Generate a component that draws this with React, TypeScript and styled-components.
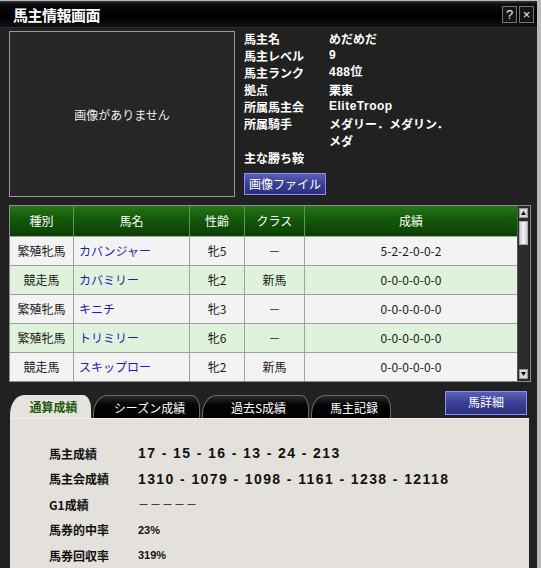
import React from "react";
import styled, { createGlobalStyle } from "styled-components";

const jp = `"Noto Sans CJK JP", "Liberation Sans", sans-serif`;
const latin = `"Liberation Sans", "Noto Sans CJK JP", sans-serif`;

const GlobalStyle = createGlobalStyle`
  html, body {
    margin: 0;
    padding: 0;
    background: #b9b9b9;
    font-family: ${jp};
  }
`;

const Window = styled.div`
  width: 537px;
  height: 567px;
  margin-top: 1px;
  background: #212121;
  display: flex;
  flex-direction: column;
  overflow: hidden;
`;

const TitleBar = styled.div`
  height: 26px;
  flex: 0 0 auto;
  display: flex;
  align-items: center;
  padding: 0 3px 0 13px;
  background: linear-gradient(#3a3a3a 0, #0c0c0c 3px, #000 60%, #111 100%);
  border-bottom: 1px solid #2c2c2c;
`;

const Title = styled.div`
  flex: 1;
  color: #fff;
  font-size: 15px;
  font-weight: bold;
  letter-spacing: -0.5px;
`;

const TitleButton = styled.div`
  width: 13px;
  height: 15px;
  margin-left: 2px;
  border: 1px solid #777;
  background: #151515;
  color: #eee;
  font-family: ${latin};
  font-size: 13px;
  line-height: 15px;
  text-align: center;
`;

const Top = styled.div`
  display: flex;
  gap: 9px;
  padding: 2px 0 0 9px;
`;

const ImageBox = styled.div`
  width: 224px;
  height: 164px;
  margin-top: 1px;
  border: 1px solid #9a9a9a;
  background: #262626;
  color: #eee;
  font-size: 12px;
  display: flex;
  align-items: center;
  justify-content: center;
`;

const Info = styled.div`
  display: flex;
  flex-direction: column;
`;

const InfoGrid = styled.div`
  display: grid;
  grid-template-columns: 85px 122px;
  line-height: 17px;
  font-size: 12px;
  font-weight: bold;
  color: #fff;
`;

const InfoValue = styled.div<{ $latin?: boolean }>`
  font-family: ${(p) => (p.$latin ? latin : jp)};
  letter-spacing: ${(p) => (p.$latin ? "0.5px" : "0")};
`;

const BlueButton = styled.div<{ $w: number }>`
  width: ${(p) => p.$w}px;
  height: 22px;
  box-sizing: border-box;
  border: 1px solid #8f93d8;
  background: linear-gradient(#5a5fb8, #3b3f92 50%, #2d3080);
  color: #fff;
  font-size: 12px;
  line-height: 20px;
  text-align: center;
  box-shadow: 0 0 0 1px #1a1a40;
`;

const TableWrap = styled.div`
  margin: 8px 0 0 9px;
  width: 520px;
  border: 1px solid #8c8c8c;
  display: flex;
`;

const Grid = styled.div`
  width: 507px;
  display: grid;
  grid-template-columns: 63px 116px 55px 60px 213px;
`;

const HeadCell = styled.div`
  height: 30px;
  box-sizing: border-box;
  border-left: 1px solid #6a8f5e;
  background: linear-gradient(#27761a, #145a0a 40%, #0c3f05);
  color: #fff;
  font-size: 12px;
  line-height: 30px;
  text-align: center;
  &:first-child {
    border-left: none;
  }
`;

const Cell = styled.div<{ $alt: boolean; $first?: boolean; $name?: boolean }>`
  height: 29px;
  box-sizing: border-box;
  border-top: 1px solid #a0a0a0;
  border-left: ${(p) => (p.$first ? "none" : "1px solid #a0a0a0")};
  background: ${(p) => (p.$alt ? "#dff2dc" : "#f3f3f3")};
  color: ${(p) => (p.$name ? "#1c1cb0" : "#1a1a1a")};
  font-size: 12px;
  line-height: 28px;
  text-align: ${(p) => (p.$name ? "left" : "center")};
  padding-left: ${(p) => (p.$name ? "5px" : "0")};
  font-family: ${jp};
`;

const ScrollBar = styled.div`
  width: 12px;
  background: #2b2b2b;
  border-left: 1px solid #555;
  display: flex;
  flex-direction: column;
  align-items: center;
  padding: 2px 0;
  box-sizing: border-box;
`;

const ScrollArrow = styled.div`
  width: 9px;
  height: 10px;
  background: #d8d8d8;
  border: 1px solid #999;
  box-sizing: border-box;
  display: flex;
  align-items: center;
  justify-content: center;
`;

const Thumb = styled.div`
  width: 7px;
  height: 22px;
  margin-top: 3px;
  background: linear-gradient(90deg, #cfcfcf, #f4f4f4, #cfcfcf);
  border: 1px solid #aaa;
  flex: 0 0 auto;
`;

const Spacer = styled.div`
  flex: 1;
`;

const TabRow = styled.div`
  display: flex;
  align-items: flex-end;
  height: 42px;
  padding: 0 10px 0 10px;
`;

const Tabs = styled.div`
  display: flex;
  gap: 2px;
`;

const Tab = styled.div<{ $active?: boolean; $w: number }>`
  width: ${(p) => p.$w}px;
  height: 23px;
  box-sizing: border-box;
  border-radius: 14px 8px 0 0 / 20px 14px 0 0;
  background: ${(p) =>
    p.$active ? "#e6e3df" : "linear-gradient(#2a2a2a, #050505 40%, #000)"};
  border: ${(p) => (p.$active ? "none" : "1px solid #6a6a6a")};
  border-bottom: none;
  color: ${(p) => (p.$active ? "#1d5a0b" : "#fff")};
  font-size: 12px;
  font-weight: ${(p) => (p.$active ? "bold" : "normal")};
  line-height: 23px;
  text-align: center;
  padding-left: 6px;
`;

const DetailButton = styled(BlueButton)`
  margin-left: auto;
  align-self: flex-start;
  margin-top: 9px;
  height: 24px;
  line-height: 20px;
`;

const Panel = styled.div`
  flex: 1;
  margin: 0 8px 0 10px;
  background: #e4e1dd;
  border-top: 1px solid #f4f2ef;
  padding: 22px 0 0 39px;
`;

const StatRow = styled.div`
  display: flex;
  height: 25.5px;
  align-items: center;
`;

const StatLabel = styled.div`
  width: 89px;
  font-size: 12px;
  font-weight: bold;
  color: #111;
`;

const StatValue = styled.div<{ $small?: boolean; $jp?: boolean }>`
  font-family: ${(p) => (p.$jp ? jp : latin)};
  font-size: ${(p) => (p.$small || p.$jp ? "11px" : "14px")};
  font-weight: ${(p) => (p.$jp ? "normal" : "bold")};
  letter-spacing: ${(p) => (p.$small ? "0" : p.$jp ? "1px" : "1.4px")};
  color: #111;
`;

const info: [string, string, boolean?][] = [
  ["馬主名", "めだめだ"],
  ["馬主レベル", "9", true],
  ["馬主ランク", "488位", true],
  ["拠点", "栗東"],
  ["所属馬主会", "EliteTroop", true],
  ["所属騎手", "メダリー．メダリン．メダ"],
  ["主な勝ち鞍", ""],
];

const rows = [
  ["繁殖牝馬", "カバンジャー", "牝5", "－", "5-2-2-0-0-2"],
  ["競走馬", "カバミリー", "牝2", "新馬", "0-0-0-0-0-0"],
  ["繁殖牝馬", "キニチ", "牝3", "－", "0-0-0-0-0-0"],
  ["繁殖牝馬", "トリミリー", "牝6", "－", "0-0-0-0-0-0"],
  ["競走馬", "スキップロー", "牝2", "新馬", "0-0-0-0-0-0"],
];

const stats: [string, string, "small" | "jp" | undefined][] = [
  ["馬主成績", "17 - 15 - 16 - 13 - 24 - 213", undefined],
  ["馬主会成績", "1310 - 1079 - 1098 - 1161 - 1238 - 12118", undefined],
  ["G1成績", "－－－－－", "jp"],
  ["馬券的中率", "23%", "small"],
  ["馬券回収率", "319%", "small"],
];

const Arrow = ({ up }: { up?: boolean }) => (
  <svg width="5" height="4" viewBox="0 0 5 4">
    <path d={up ? "M0 4 L2.5 0 L5 4 Z" : "M0 0 L2.5 4 L5 0 Z"} fill="#111" />
  </svg>
);

export default function App() {
  return (
    <>
      <GlobalStyle />
      <Window>
        <TitleBar>
          <Title>馬主情報画面</Title>
          <TitleButton>?</TitleButton>
          <TitleButton>×</TitleButton>
        </TitleBar>
        <Top>
          <ImageBox>画像がありません</ImageBox>
          <Info>
            <InfoGrid>
              {info.map(([k, v, l]) => (
                <React.Fragment key={k}>
                  <div>{k}</div>
                  <InfoValue $latin={l}>{v}</InfoValue>
                </React.Fragment>
              ))}
            </InfoGrid>
            <BlueButton $w={82} style={{ marginTop: 7 }}>
              画像ファイル
            </BlueButton>
          </Info>
        </Top>
        <TableWrap>
          <Grid>
            {["種別", "馬名", "性齢", "クラス", "成績"].map((h) => (
              <HeadCell key={h}>{h}</HeadCell>
            ))}
            {rows.map((r, i) =>
              r.map((c, j) => (
                <Cell key={`${i}-${j}`} $alt={i % 2 === 1} $first={j === 0} $name={j === 1}>
                  {c}
                </Cell>
              ))
            )}
          </Grid>
          <ScrollBar>
            <ScrollArrow>
              <Arrow up />
            </ScrollArrow>
            <Thumb />
            <Spacer />
            <ScrollArrow>
              <Arrow />
            </ScrollArrow>
          </ScrollBar>
        </TableWrap>
        <TabRow>
          <Tabs>
            <Tab $active $w={81}>通算成績</Tab>
            <Tab $w={107}>シーズン成績</Tab>
            <Tab $w={107}>過去S成績</Tab>
            <Tab $w={80}>馬主記録</Tab>
          </Tabs>
          <DetailButton $w={82}>馬詳細</DetailButton>
        </TabRow>
        <Panel>
          {stats.map(([k, v, kind]) => (
            <StatRow key={k}>
              <StatLabel>{k}</StatLabel>
              <StatValue $small={kind === "small"} $jp={kind === "jp"}>
                {v}
              </StatValue>
            </StatRow>
          ))}
        </Panel>
      </Window>
    </>
  );
}
